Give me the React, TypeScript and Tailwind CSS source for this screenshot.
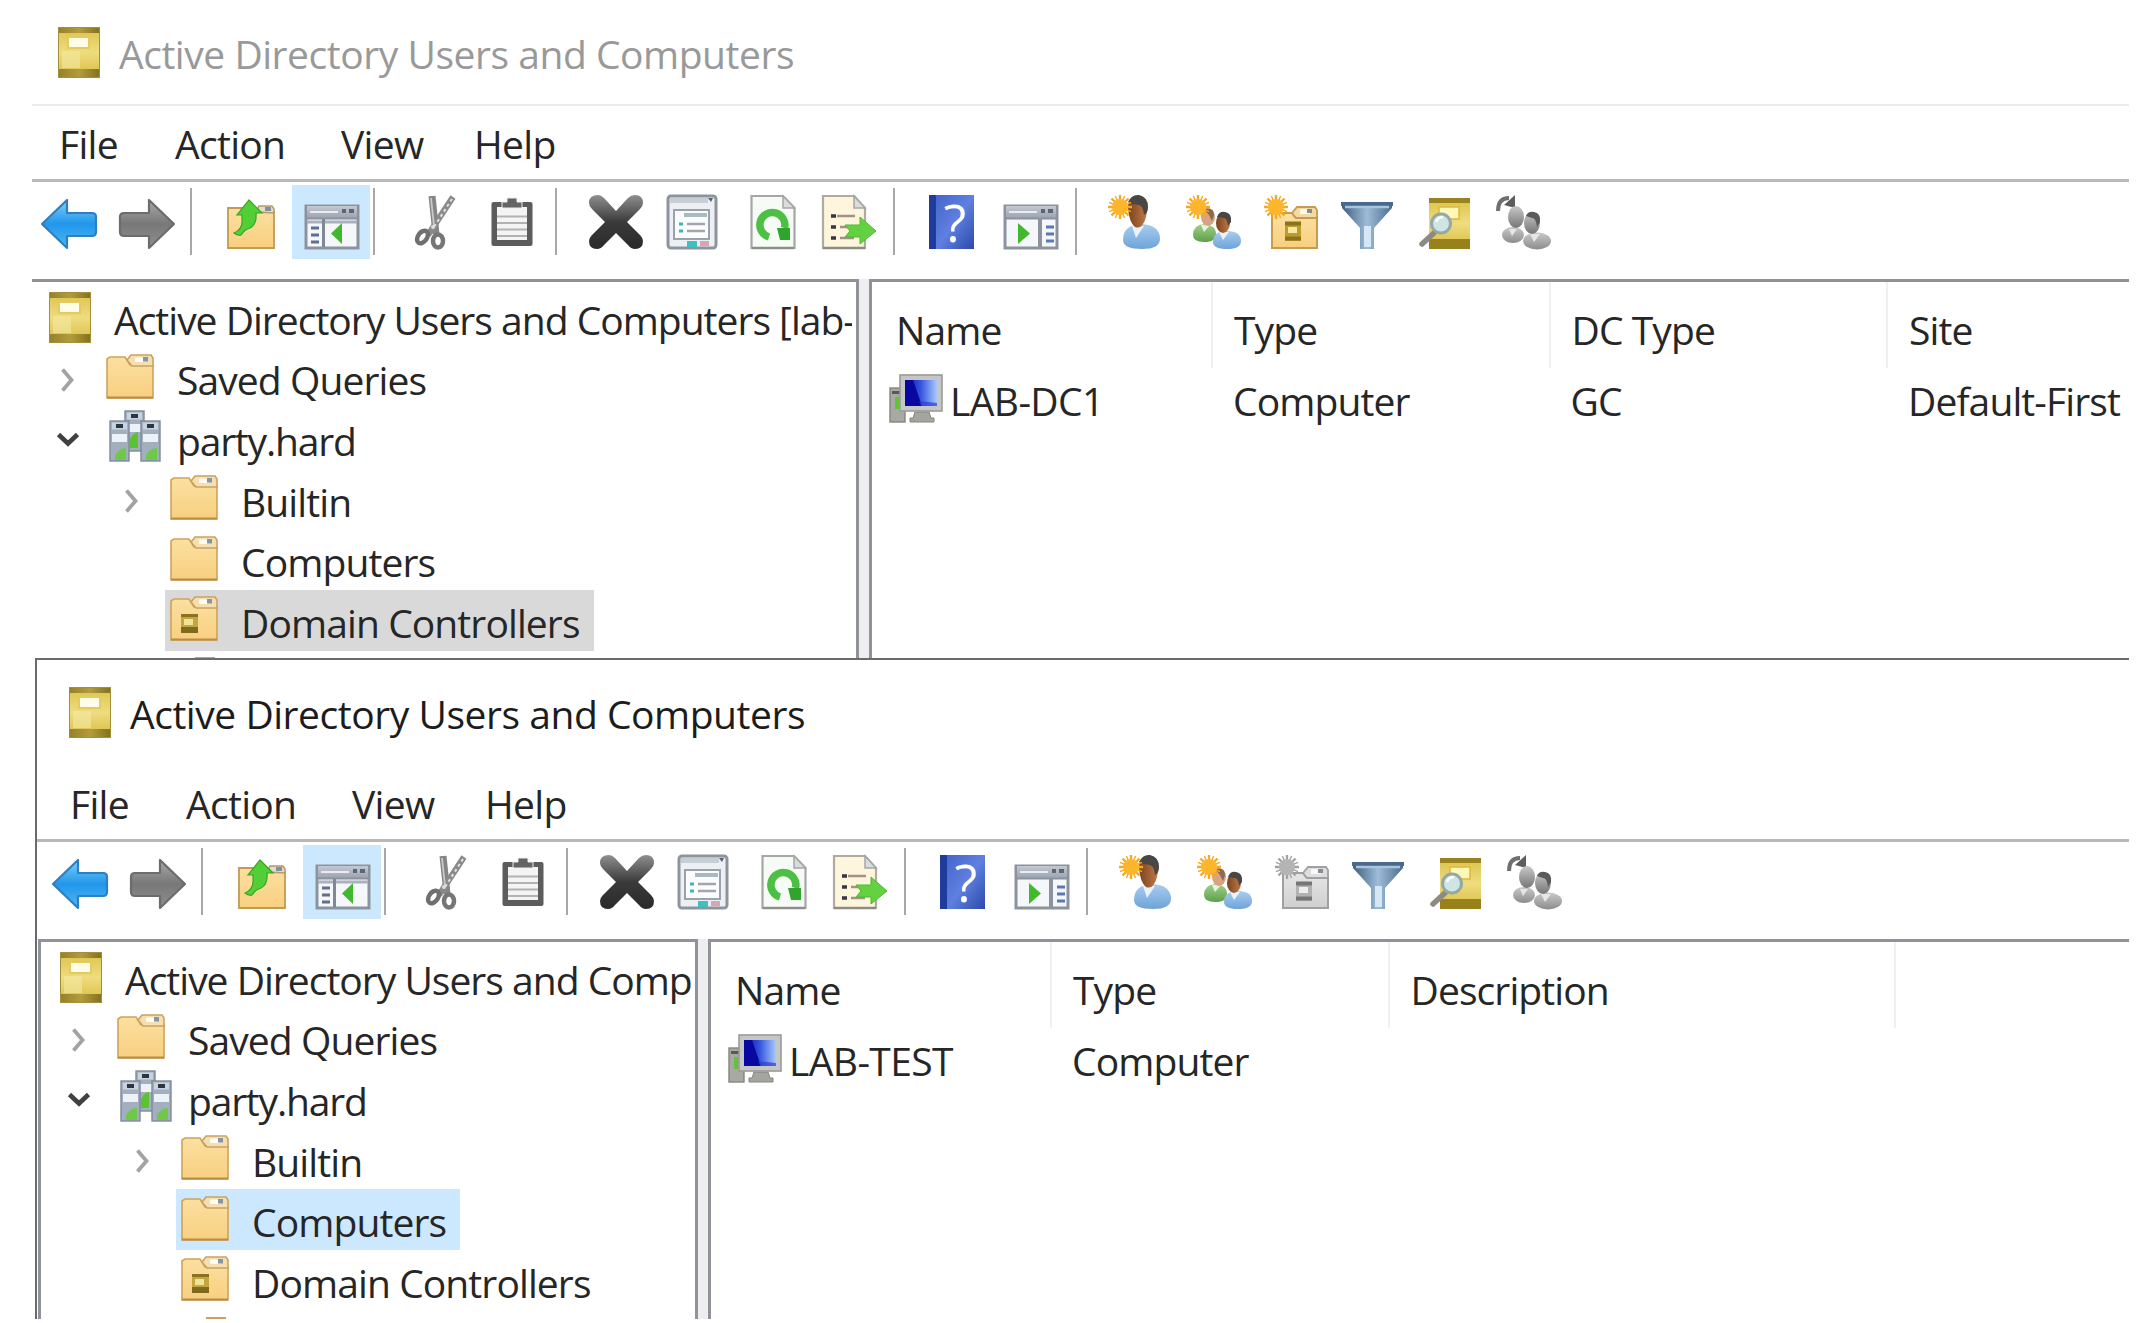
import React from "react";

const FONT =
  "font-['Open_Sans','Noto_Sans',sans-serif] text-[39px] leading-none tracking-[-0.9px] whitespace-nowrap";

type IconProps = { className?: string };

/* ---------- shared gradients ---------- */

function Gradients() {
  const stops = (id: string, a: string, b: string, c?: string, horizontal = false) => (
    <linearGradient id={id} x1="0" y1="0" x2={horizontal ? "1" : "0"} y2={horizontal ? "0" : "1"}>
      <stop offset="0" stopColor={a} />
      {c ? <stop offset="0.5" stopColor={b} /> : null}
      <stop offset="1" stopColor={c ?? b} />
    </linearGradient>
  );
  return (
    <svg className="absolute size-0" aria-hidden="true">
      <defs>
        {stops("gold", "#dcc24a", "#eedc7e", "#d8bb3e")}
        {stops("goldEnd", "#93802a", "#b39c3c", "#80701e", true)}
        {stops("folder", "#fbe0a0", "#f8cf80")}
        {stops("blueArrow", "#7fd0fb", "#2196ea", "#4db9f5")}
        {stops("grayArrow", "#a9a9a9", "#787878", "#8f8f8f")}
        {stops("cross", "#8f8f8f", "#3a3a3a", "#2a2a2a")}
        {stops("help", "#2a4bb4", "#6a8be4", "#2c49ab", true)}
        {stops("shirt", "#a9cdf0", "#6ea3d8")}
        {stops("greenShirt", "#a3d18d", "#5ba048")}
        {stops("skin", "#7a4320", "#c07b45", undefined, true)}
        {stops("graySkin", "#c8c8c8", "#767676")}
        {stops("grayShirt", "#c9c9c9", "#8c8c8c")}
        {stops("funnel", "#3f5f80", "#9dbcd8", "#4c6d90", true)}
        {stops("screen", "#0a0aa8", "#3657e0", "#a9c8ff", true)}
        {stops("caption", "#c3c8d1", "#9da4b0")}
        {stops("grayFolder", "#e6e6e6", "#cfcfcf")}
      </defs>
    </svg>
  );
}

/* ---------- tree and list icons ---------- */

function BookIcon({ className = "" }: IconProps) {
  return (
    <svg className={`h-[51px] w-[42px] shrink-0 ${className}`} viewBox="0 0 42 51">
      <rect width="42" height="51" fill="url(#gold)" />
      <rect x="4" y="24" width="18" height="17" fill="#f4e9a4" opacity="0.6" />
      <rect width="42" height="6" fill="url(#goldEnd)" />
      <rect y="42" width="42" height="9" fill="url(#goldEnd)" />
      <rect x="0.5" y="0.5" width="41" height="50" fill="none" stroke="#a4903a" />
      <rect x="10" y="10" width="21" height="11" fill="#fffce8" stroke="#e3cb62" strokeWidth="2" />
    </svg>
  );
}

function FolderIcon({ className = "", unit = false }: IconProps & { unit?: boolean }) {
  return (
    <svg className={`h-[45px] w-[48px] shrink-0 ${className}`} viewBox="0 0 48 45">
      <path d="M1 44V5l3-2h15l5 8h23v33z" fill="url(#folder)" stroke="#cfa35a" strokeWidth="1.6" />
      <path d="M21 6l4-5h20l2 3v8H26z" fill="#f6dfae" stroke="#c9a263" strokeWidth="1.6" />
      <rect x="29" y="3.500" width="10" height="4.500" rx="1" fill="#fffdf5" />
      <rect x="37" y="3" width="5" height="4.500" fill="#8796a4" />
      <path d="M1 43.500h46" stroke="#b98c46" strokeWidth="2" />
      {unit && (
        <g>
          <rect x="11" y="18" width="17" height="19" fill="#c4a63e" />
          <rect x="11" y="18" width="17" height="3" fill="#8a7222" />
          <rect x="11" y="31" width="17" height="6" fill="#80691a" />
          <rect x="14" y="23" width="9" height="6" fill="#efe29a" />
        </g>
      )}
    </svg>
  );
}

function Tower({ x, y, h }: { x: number; y: number; h: number }) {
  return (
    <g>
      <rect x={x} y={y} width="19" height={h} fill="#a3afbf" stroke="#7d8a9a" strokeWidth="1.4" />
      <rect x={x + 2} y={y + 1.5} width="15" height="7" fill="#c9d3e0" />
      <rect x={x + 6} y={y + 3} width="7" height="4" fill="#2c3540" />
      <rect x={x + 2} y={y + 13} width="15" height="8" fill="#edf2f8" />
    </g>
  );
}

function DomainIcon({ className = "" }: IconProps) {
  return (
    <svg className={`h-[52px] w-[52px] shrink-0 ${className}`} viewBox="0 0 52 52">
      <Tower x={16} y={1} h={40} />
      <path d="M21 38V29q3-6 8-7v16z" fill="#5cc233" />
      <Tower x={1} y={11} h={40} />
      <Tower x={32} y={11} h={40} />
      <path d="M6 50V45q4-7 11-7v12z" fill="#6fc84a" />
      <path d="M37 50V45q4-7 11-7v12z" fill="#6fc84a" />
    </svg>
  );
}

function ComputerIcon({ className = "" }: IconProps) {
  return (
    <svg className={`h-[49px] w-[54px] shrink-0 ${className}`} viewBox="0 0 54 49">
      <rect x="1" y="14" width="15" height="34" fill="#a9a9a4" stroke="#85857f" strokeWidth="1.4" />
      <rect x="3" y="17" width="9" height="3" fill="#5a5a55" />
      <rect x="6" y="23" width="4" height="12" fill="#62c23a" />
      <path d="M26 38h14l2 6h3v4H21v-4h3z" fill="#a5a5a0" stroke="#85857f" />
      <rect x="11" y="1" width="42" height="36" fill="#c6c6c6" stroke="#9a9a98" strokeWidth="1.6" />
      <rect x="16" y="6" width="32" height="26" fill="url(#screen)" />
      <path d="M16 6h8l9 26H16z" fill="#0808a0" />
      <path d="M30 27l18 2v3H32z" fill="#2b3fd0" opacity="0.7" />
    </svg>
  );
}

function Chevron({ open }: { open: boolean }) {
  return open ? (
    <svg className="h-6 w-6" viewBox="0 0 24 24">
      <path d="M2.500 6.500l9.500 9 9.500-9" fill="none" stroke="#404040" strokeWidth="4.600" />
    </svg>
  ) : (
    <svg className="h-6 w-6" viewBox="0 0 24 24">
      <path d="M6.500 1.500l9 10.500-9 10.500" fill="none" stroke="#a3a3a3" strokeWidth="3.800" />
    </svg>
  );
}

/* ---------- toolbar icons, all 56px tall ---------- */

function BackIcon({ className = "" }: IconProps) {
  return (
    <svg className={`h-14 w-[58px] shrink-0 ${className}`} viewBox="0 0 58 56">
      <path d="M2 30L27 6v13h25q4 0 4 4v15q0 4-4 4H27v12z" fill="url(#blueArrow)" stroke="#2f7fc0" strokeWidth="2.200" strokeLinejoin="round" />
    </svg>
  );
}

function ForwardIcon({ className = "" }: IconProps) {
  return (
    <svg className={`h-14 w-[58px] shrink-0 ${className}`} viewBox="0 0 58 56">
      <path d="M56 30L31 6v13H6q-4 0-4 4v15q0 4 4 4h25v12z" fill="url(#grayArrow)" stroke="#6c6c6c" strokeWidth="2.200" strokeLinejoin="round" />
    </svg>
  );
}

function UpFolderIcon({ className = "" }: IconProps) {
  return (
    <svg className={`h-14 w-[50px] shrink-0 ${className}`} viewBox="0 0 50 56">
      <path d="M2 54V14h20l4 4h22v36z" fill="url(#folder)" stroke="#c39a52" strokeWidth="1.800" />
      <path d="M30 18l3-6h13l2 3v4z" fill="#e3dccb" stroke="#b59a6a" strokeWidth="1.500" />
      <rect x="39" y="13" width="6" height="4" fill="#8090a0" />
      <path d="M8 39q9-4 8-14v-4h-5L23 6l13 13h-6q1 11-6 15-6 2-8 6-2 3-8-1z" fill="#52cf36" stroke="#36a524" strokeWidth="1.200" />
    </svg>
  );
}

function PaneIcon({ className = "", flipped = false }: IconProps & { flipped?: boolean }) {
  return (
    <svg className={`h-14 w-[56px] shrink-0 ${className}`} viewBox="0 0 56 56">
      <rect x="2" y="12" width="52" height="42" fill="#f5f7fa" stroke="#8b939f" strokeWidth="3" />
      <rect x="3" y="12" width="50" height="12" fill="url(#caption)" />
      <path d="M6 18h28" stroke="#e8ecf2" strokeWidth="2" />
      <path d="M38 17h4M45 17h5" stroke="#5b6675" strokeWidth="4" />
      <path d="M2 24.500h52" stroke="#8b939f" strokeWidth="2" />
      {flipped ? (
        <g>
          <path d="M37 25v28" stroke="#8b939f" strokeWidth="4" />
          <path d="M43 33h8M43 40h8M43 47h8" stroke="#5a78b5" strokeWidth="3" />
          <path d="M15 29l12 10.500L15 50z" fill="#42b82c" />
        </g>
      ) : (
        <g>
          <path d="M3 28h50" stroke="#aab2bd" strokeWidth="3" />
          <path d="M19.500 25v28" stroke="#7f8896" strokeWidth="3" />
          <path d="M7 34h8M7 41h8M7 48h8" stroke="#5f6f8e" strokeWidth="3" />
          <path d="M38 29L27 39.500 38 50z" fill="#42b82c" />
        </g>
      )}
    </svg>
  );
}

function CutIcon({ className = "" }: IconProps) {
  return (
    <svg className={`h-14 w-[42px] shrink-0 ${className}`} viewBox="0 0 42 56" fill="none">
      <path d="M18 2l4 38" stroke="#858585" strokeWidth="7" />
      <path d="M39 3L14 41" stroke="#8a8a8a" strokeWidth="6" />
      <path d="M17 4l3 28" stroke="#c9c9c9" strokeWidth="1.800" />
      <path d="M38 5L20 33" stroke="#e2e2e2" strokeWidth="2" strokeDasharray="3 3" />
      <ellipse cx="8.500" cy="43" rx="4.500" ry="7" transform="rotate(35 8.500 43)" stroke="#6f6f6f" strokeWidth="4.500" />
      <ellipse cx="24" cy="47" rx="5" ry="6.500" stroke="#767676" strokeWidth="4.500" />
      <circle cx="19" cy="33" r="2" fill="#dddddd" />
    </svg>
  );
}

function PasteIcon({ className = "" }: IconProps) {
  return (
    <svg className={`h-14 w-[44px] shrink-0 ${className}`} viewBox="0 0 44 56">
      <rect x="1.500" y="8" width="41" height="44" rx="2" fill="#5c5c5c" />
      <rect x="7" y="13" width="30" height="33" fill="#f4f4f4" />
      <path d="M7 22.500h30M7 29h30M7 35.500h30M7 42h30" stroke="#b2b2b2" strokeWidth="2" />
      <path d="M12 14V8h5V4h10v4h5v6z" fill="#646464" stroke="#ededed" strokeWidth="1" />
    </svg>
  );
}

function DeleteIcon({ className = "" }: IconProps) {
  return (
    <svg className={`h-14 w-[58px] shrink-0 ${className}`} viewBox="0 0 58 56">
      <path d="M2 9q0-8 9-8 3 0 6 3l12 13L41 4q3-3 7-3 8 0 8 8 0 3-3 6L40 28l13 13q3 3 3 6 0 8-8 8-4 0-7-4L29 39 17 51q-3 4-7 4-8 0-8-8 0-3 3-6l13-13L5 15Q2 12 2 9z" fill="url(#cross)" />
    </svg>
  );
}

function PropertiesIcon({ className = "" }: IconProps) {
  return (
    <svg className={`h-14 w-[52px] shrink-0 ${className}`} viewBox="0 0 52 56">
      <rect x="2" y="2" width="48" height="52" rx="3" fill="#eceff3" stroke="#8d949e" strokeWidth="3" />
      <path d="M4 6.500h38" stroke="#c8ced6" strokeWidth="5" />
      <path d="M42 4h5l-2 4z" fill="#59616c" />
      <rect x="8" y="16" width="35" height="29" fill="#fbfcfd" stroke="#9ba2ac" strokeWidth="2" />
      <path d="M18 21h23" stroke="#a9b9c4" strokeWidth="4" />
      <path d="M21 30h18M21 37h18" stroke="#a7a3aa" strokeWidth="2.500" />
      <path d="M13 30h4M13 37h4" stroke="#3db4c0" strokeWidth="3" />
      <rect x="21" y="47" width="10" height="6" fill="#3fc0bd" />
      <rect x="34" y="47" width="9" height="5" fill="#d7a6ae" />
    </svg>
  );
}

function RefreshIcon({ className = "" }: IconProps) {
  return (
    <svg className={`h-14 w-[46px] shrink-0 ${className}`} viewBox="0 0 46 56">
      <path d="M1.500 2H33l11.500 12v40h-43z" fill="#f7fbf6" stroke="#a6a6a6" strokeWidth="2.200" />
      <path d="M33 2v12h11.500z" fill="#dcdcdc" stroke="#a6a6a6" strokeWidth="1.500" />
      <path d="M19 43A12.500 12.500 0 1 1 34.500 34" fill="none" stroke="#4cc044" strokeWidth="7.500" />
      <path d="M27 34h13v12H30z" fill="#2fa52e" />
      <path d="M2 54h42" stroke="#8e8e8e" strokeWidth="2.500" />
    </svg>
  );
}

function ExportIcon({ className = "" }: IconProps) {
  return (
    <svg className={`h-14 w-[56px] shrink-0 ${className}`} viewBox="0 0 56 56">
      <path d="M2 2h31l11 12v40H2z" fill="#fdf6dc" stroke="#b0aaa0" strokeWidth="2.200" />
      <path d="M33 2v12h11z" fill="#dcdcdc" stroke="#a6a6a6" strokeWidth="1.500" />
      <path d="M16 22h18M19 33h10M19 44h14" stroke="#a58f86" strokeWidth="2.500" />
      <path d="M10 22h5M10 33h5M10 44h5" stroke="#3a3442" strokeWidth="3.500" />
      <path d="M24 31h15v-8l16 14-16 13v-7H24l5-6z" fill="#64d240" stroke="#4fb834" strokeWidth="1" />
      <path d="M2 54h42" stroke="#8e8a84" strokeWidth="2.500" />
    </svg>
  );
}

function HelpIcon({ className = "" }: IconProps) {
  return (
    <span className={`flex h-14 w-[47px] shrink-0 items-center justify-center ${className}`}>
      <span className="flex h-[54px] w-[45px] items-center justify-center border-l-[7px] border-[#1f3c9c] bg-linear-to-br from-[#4565cc] via-[#5f80e0] to-[#2c49ab] font-['Open_Sans','Noto_Sans',sans-serif] text-[52px] leading-none font-medium tracking-normal text-white">
        ?
      </span>
    </span>
  );
}

function Sun({ gray = false }: { gray?: boolean }) {
  const color = gray ? "#a2a2a2" : "#f6a821";
  return (
    <g>
      <g stroke={color} strokeWidth="2.400">
        <path d="M12 1v24M0 13h24M3.500 4.500l17 17M20.500 4.500l-17 17" />
      </g>
      <path d="M7.400 2l9.200 22M16.600 2L7.400 24M1 8.400l22 9.200M1 17.600l22-9.200" stroke={color} strokeWidth="1.400" />
      <circle cx="12" cy="13" r="8" fill={gray ? "#b4b4b4" : "#fdb62c"} />
    </g>
  );
}

function UserIcon({ className = "" }: IconProps) {
  return (
    <svg className={`h-14 w-[53px] shrink-0 ${className}`} viewBox="0 0 53 56">
      <path d="M15 46q0-15 18-16 19 1 19 15 0 10-18 10-19 0-19-9z" fill="url(#shirt)" />
      <path d="M24 32l4 12 8-12z" fill="#eaf3fc" />
      <path d="M20 14q0-12 10-12 10 1 9 12 0 10-4 16-3 5-8 3-6-5-7-19z" fill="url(#skin)" />
      <path d="M20 8Q24 0 31 1q9 2 9 12 0 6-4 8-1-9-5-10-6 0-11-3z" fill="#4a4644" />
      <Sun />
    </svg>
  );
}

function GroupIcon({ className = "" }: IconProps) {
  return (
    <svg className={`h-14 w-[55px] shrink-0 ${className}`} viewBox="0 0 55 56">
      <path d="M7 41q0-10 11-11 12 1 12 10 0 8-12 8-11 0-11-7z" fill="url(#greenShirt)" />
      <path d="M15 31l3 7 6-7z" fill="#e6f4de" />
      <ellipse cx="22" cy="23" rx="7" ry="9" fill="#d9a283" />
      <path d="M18 15q10-2 10 6l-2 6-3-6z" fill="#8a6a50" />
      <path d="M27 48q0-11 14-11 14 0 14 10 0 8-14 8t-14-7z" fill="url(#shirt)" />
      <path d="M33 38l4 8 6-8z" fill="#eaf3fc" />
      <ellipse cx="37" cy="29" rx="7" ry="10" fill="url(#skin)" />
      <path d="M31 23q2-6 8-5 7 1 6 10l-3 4q-1-8-4-8z" fill="#4a4644" />
      <Sun />
    </svg>
  );
}

function NewUnitIcon({ className = "", disabled = false }: IconProps & { disabled?: boolean }) {
  const edge = disabled ? "#a0a0a0" : "#c89b52";
  return (
    <svg className={`h-14 w-[55px] shrink-0 ${className}`} viewBox="0 0 55 56">
      <path d="M8 54V19h20l3 4h22v31z" fill={disabled ? "url(#grayFolder)" : "url(#folder)"} stroke={edge} strokeWidth="2" />
      <path d="M28 19l5-6h18l2 3v8H32z" fill={disabled ? "#dedede" : "#f4d9a2"} stroke={edge} strokeWidth="1.800" />
      <rect x="36" y="15" width="10" height="5" fill={disabled ? "#f8f8f8" : "#fffaf0"} />
      <rect x="43" y="15" width="5" height="4" fill="#858c94" />
      <rect x="21" y="28" width="16" height="19" fill={disabled ? "#b2b2b2" : "#bd9c2e"} />
      <path d="M21 29.500h16M21 44.500h16" stroke={disabled ? "#767676" : "#8d721c"} strokeWidth="4" />
      <rect x="24" y="33" width="9" height="6" fill={disabled ? "#eeeeee" : "#f3e89f"} />
      <Sun gray={disabled} />
    </svg>
  );
}

function FilterIcon({ className = "" }: IconProps) {
  return (
    <svg className={`h-14 w-[54px] shrink-0 ${className}`} viewBox="0 0 54 56">
      <path d="M2 9h50v5L34 34v21H20V34L2 14z" fill="url(#funnel)" />
      <path d="M1 8h52v4H1z" fill="#48698c" />
      <path d="M5 13h44" stroke="#a9c4dc" strokeWidth="2.500" />
      <path d="M24 32h7v21h-7z" fill="#d5e6f5" />
    </svg>
  );
}

function FindIcon({ className = "" }: IconProps) {
  return (
    <svg className={`h-14 w-[52px] shrink-0 ${className}`} viewBox="0 0 52 56">
      <rect x="10" y="4" width="41" height="51" fill="url(#gold)" />
      <rect x="10" y="4" width="41" height="5" fill="#9a831f" />
      <rect x="10" y="45" width="41" height="10" fill="#98801b" />
      <rect x="20" y="13" width="20" height="12" fill="#fff7b8" stroke="#dcb93a" strokeWidth="1.500" />
      <path d="M15 39L3 50" stroke="#8f8a80" strokeWidth="5.500" strokeLinecap="round" />
      <circle cx="22" cy="29.500" r="9.500" fill="#cfe5e4" stroke="#94a8a6" strokeWidth="3" />
      <path d="M17 28q2-5 7-5" fill="none" stroke="#ffffff" strokeWidth="2.500" />
    </svg>
  );
}

function AddToGroupIcon({ className = "" }: IconProps) {
  return (
    <svg className={`h-14 w-[57px] shrink-0 ${className}`} viewBox="0 0 57 56">
      <path d="M3 17Q3 4 14 4" fill="none" stroke="#6f6f6f" strokeWidth="4" />
      <path d="M20 1v13l-11-3z" fill="#5d5d5d" />
      <ellipse cx="18" cy="41" rx="11" ry="8" fill="url(#grayShirt)" />
      <ellipse cx="21" cy="23" rx="8" ry="11" fill="url(#graySkin)" />
      <ellipse cx="42" cy="47" rx="14" ry="8.500" fill="url(#grayShirt)" />
      <path d="M14 35l3 7 5-7zM35 40l4 8 6-8z" fill="#e6e6e6" />
      <ellipse cx="37" cy="29" rx="8" ry="11" fill="url(#graySkin)" />
      <path d="M31 22q2-5 8-4 7 1 6 10l-3 5q-1-9-5-9z" fill="#5a5a5a" />
    </svg>
  );
}

/* ---------- window chrome ---------- */

function Separator({ className = "" }: IconProps) {
  return <span className={`-mt-[6px] h-[67px] w-[2px] shrink-0 bg-[#a8a8a8] ${className}`} />;
}

function Toolbar({ unitDisabled, inset }: { unitDisabled: boolean; inset: string }) {
  return (
    <div className={`flex h-[75px] items-start pt-3 ${inset}`}>
      <BackIcon className="ml-2" />
      <ForwardIcon className="ml-5" />
      <Separator className="ml-[14px]" />
      <UpFolderIcon className="ml-[34px]" />
      <span className="-mt-[9px] ml-4 flex h-[74px] w-[78px] shrink-0 bg-[#cce8ff] pt-[9px] pl-3">
        <PaneIcon />
      </span>
      <Separator className="ml-[3px]" />
      <CutIcon className="ml-[39px]" />
      <PasteIcon className="ml-[34px]" />
      <Separator className="ml-[21px]" />
      <DeleteIcon className="ml-[30px]" />
      <PropertiesIcon className="ml-[21px]" />
      <RefreshIcon className="ml-8" />
      <ExportIcon className="ml-[25px]" />
      <Separator className="ml-4" />
      <HelpIcon className="ml-[33px]" />
      <PaneIcon className="ml-7" flipped />
      <Separator className="ml-4" />
      <UserIcon className="ml-[31px]" />
      <GroupIcon className="ml-[25px]" />
      <NewUnitIcon className="ml-[23px]" disabled={unitDisabled} />
      <FilterIcon className="ml-[21px]" />
      <FindIcon className="ml-[25px]" />
      <AddToGroupIcon className="ml-6" />
    </div>
  );
}

function Menu({ inset }: { inset: string }) {
  return (
    <nav className={`flex h-[73px] items-center pt-[2px] tracking-[-0.7px] text-[#262626] ${inset}`}>
      <span className="w-[117px] pl-[27px]">File</span>
      <span className="w-[166px] pl-[26px]">Action</span>
      <span className="w-[132px] pl-[26px]">View</span>
      <span className="pl-[27px]">Help</span>
    </nav>
  );
}

type Node = {
  label: string;
  icon: "folder" | "unit" | "domain";
  level: 1 | 2;
  chevron?: "open" | "closed";
};

const NODES: Node[] = [
  { label: "Saved Queries", icon: "folder", level: 1, chevron: "closed" },
  { label: "party.hard", icon: "domain", level: 1, chevron: "open" },
  { label: "Builtin", icon: "folder", level: 2, chevron: "closed" },
  { label: "Computers", icon: "folder", level: 2 },
  { label: "Domain Controllers", icon: "unit", level: 2 },
];

function Tree({ root, selected, selectedClass }: { root: string; selected: string; selectedClass: string }) {
  return (
    <div className="overflow-hidden pt-[5px]">
      <div className="flex h-[60.6px] items-center">
        <BookIcon className="ml-[17px]" />
        <span className="ml-[23px] pt-1 tracking-[-0.99px]">{root}</span>
      </div>
      {NODES.map((n) => (
        <div key={n.label} className={`flex h-[60.6px] items-center ${n.level === 2 ? "pl-[88px]" : "pl-6"}`}>
          <span className="flex w-[45px] shrink-0 pt-1">{n.chevron && <Chevron open={n.chevron === "open"} />}</span>
          <span className={`flex h-full items-center pr-[14px] ${n.label === selected ? selectedClass : ""}`}>
            {n.icon === "domain" ? (
              <DomainIcon className="-mt-1 mr-4 ml-2" />
            ) : (
              <FolderIcon className="-mt-[3px] mr-[23px] ml-[5px]" unit={n.icon === "unit"} />
            )}
            <span className={`pt-1 ${n.icon === "domain" ? "tracking-[-1.2px]" : ""}`}>{n.label}</span>
          </span>
        </div>
      ))}
      <div className="mt-[6px] ml-[163px] h-1 w-5 bg-[#c9a263]" />
    </div>
  );
}

type Column = { title: string; value: string; width: string };

function List({ name, columns }: { name: string; columns: Column[] }) {
  return (
    <div className="min-w-0 flex-1 overflow-hidden border-t-[3px] border-l-[3px] border-[#909299]">
      <div className="flex h-[86px]">
        <span className="flex w-[341px] shrink-0 items-center border-r-2 border-[#f0f0f3] pt-2 pl-6">Name</span>
        {columns.map((c) => (
          <span key={c.title} className={`flex shrink-0 items-center border-r-2 border-[#f0f0f3] pt-2 pl-[21px] ${c.width}`}>
            {c.title}
          </span>
        ))}
      </div>
      <div className="flex h-[62px] items-center">
        <span className="flex w-[341px] shrink-0 items-center gap-[7px] pl-[17px]">
          <ComputerIcon className="-mt-px" />
          <span className="pt-[3px] tracking-[-0.6px]">{name}</span>
        </span>
        {columns.map((c) => (
          <span key={c.title} className={`shrink-0 pt-[3px] pl-5 ${c.width}`}>
            {c.value}
          </span>
        ))}
      </div>
    </div>
  );
}

export default function App() {
  return (
    <main className={`h-[1323px] w-[2144px] overflow-hidden bg-white ${FONT} text-[#262626]`}>
      <Gradients />

      {/* Inactive window */}
      <section className="ml-8 flex h-[658px] w-[2097px] flex-col overflow-hidden">
        <header className="flex h-[104px] shrink-0 items-center text-[#999999]">
          <BookIcon className="ml-[26px]" />
          <h1 className="ml-[19px] pt-[3px] tracking-[-0.46px]">Active Directory Users and Computers</h1>
        </header>
        <div className="border-t-2 border-b-[3px] border-t-[#ebebeb] border-b-[#b8b8b8]">
          <Menu inset="" />
        </div>
        <Toolbar inset="" unitDisabled={false} />
        <div className="relative -z-10 h-[22px] shrink-0 bg-[#eeeeee]" />
        <div className="flex min-h-0 flex-1">
          <div className="w-[827px] shrink-0 overflow-hidden border-t-[3px] border-r-[3px] border-[#909299] pr-1">
            <Tree
              root="Active Directory Users and Computers [lab-"
              selected="Domain Controllers"
              selectedClass="bg-[#d9d9d9]"
            />
          </div>
          <div className="w-[10px] shrink-0 bg-[#eeeef1]" />
          <List
            name="LAB-DC1"
            columns={[
              { title: "Type", value: "Computer", width: "w-[337.5px]" },
              { title: "DC Type", value: "GC", width: "w-[337.5px]" },
              { title: "Site", value: "Default-First", width: "w-[337.5px]" },
            ]}
          />
        </div>
      </section>

      {/* Active window */}
      <section className="ml-[35px] flex h-[661px] w-[2094px] flex-col overflow-hidden border-t-2 border-l-2 border-[#6a6b6d]">
        <header className="flex h-[104px] shrink-0 items-center pl-[6px] text-[#1c1c1c]">
          <BookIcon className="ml-[26px]" />
          <h1 className="ml-[19px] pt-[3px] tracking-[-0.46px]">Active Directory Users and Computers</h1>
        </header>
        <div className="border-b-[3px] border-b-[#b8b8b8] pt-[2px]">
          <Menu inset="pl-[6px]" />
        </div>
        <Toolbar inset="pl-[6px]" unitDisabled />
        <div className="relative -z-10 h-[22px] shrink-0 bg-[#eeeef0]" />
        <div className="flex min-h-0 flex-1 pl-px">
          <div className="w-[660px] shrink-0 overflow-hidden border-x-[3px] border-t-[3px] border-[#909299] pr-[2px] pl-[2px]">
            <Tree root="Active Directory Users and Comp" selected="Computers" selectedClass="bg-[#cce8ff]" />
          </div>
          <div className="w-[10px] shrink-0 bg-[#eeeef1]" />
          <List
            name="LAB-TEST"
            columns={[
              { title: "Type", value: "Computer", width: "w-[337.5px]" },
              { title: "Description", value: "", width: "w-[506px]" },
            ]}
          />
        </div>
      </section>
    </main>
  );
}
